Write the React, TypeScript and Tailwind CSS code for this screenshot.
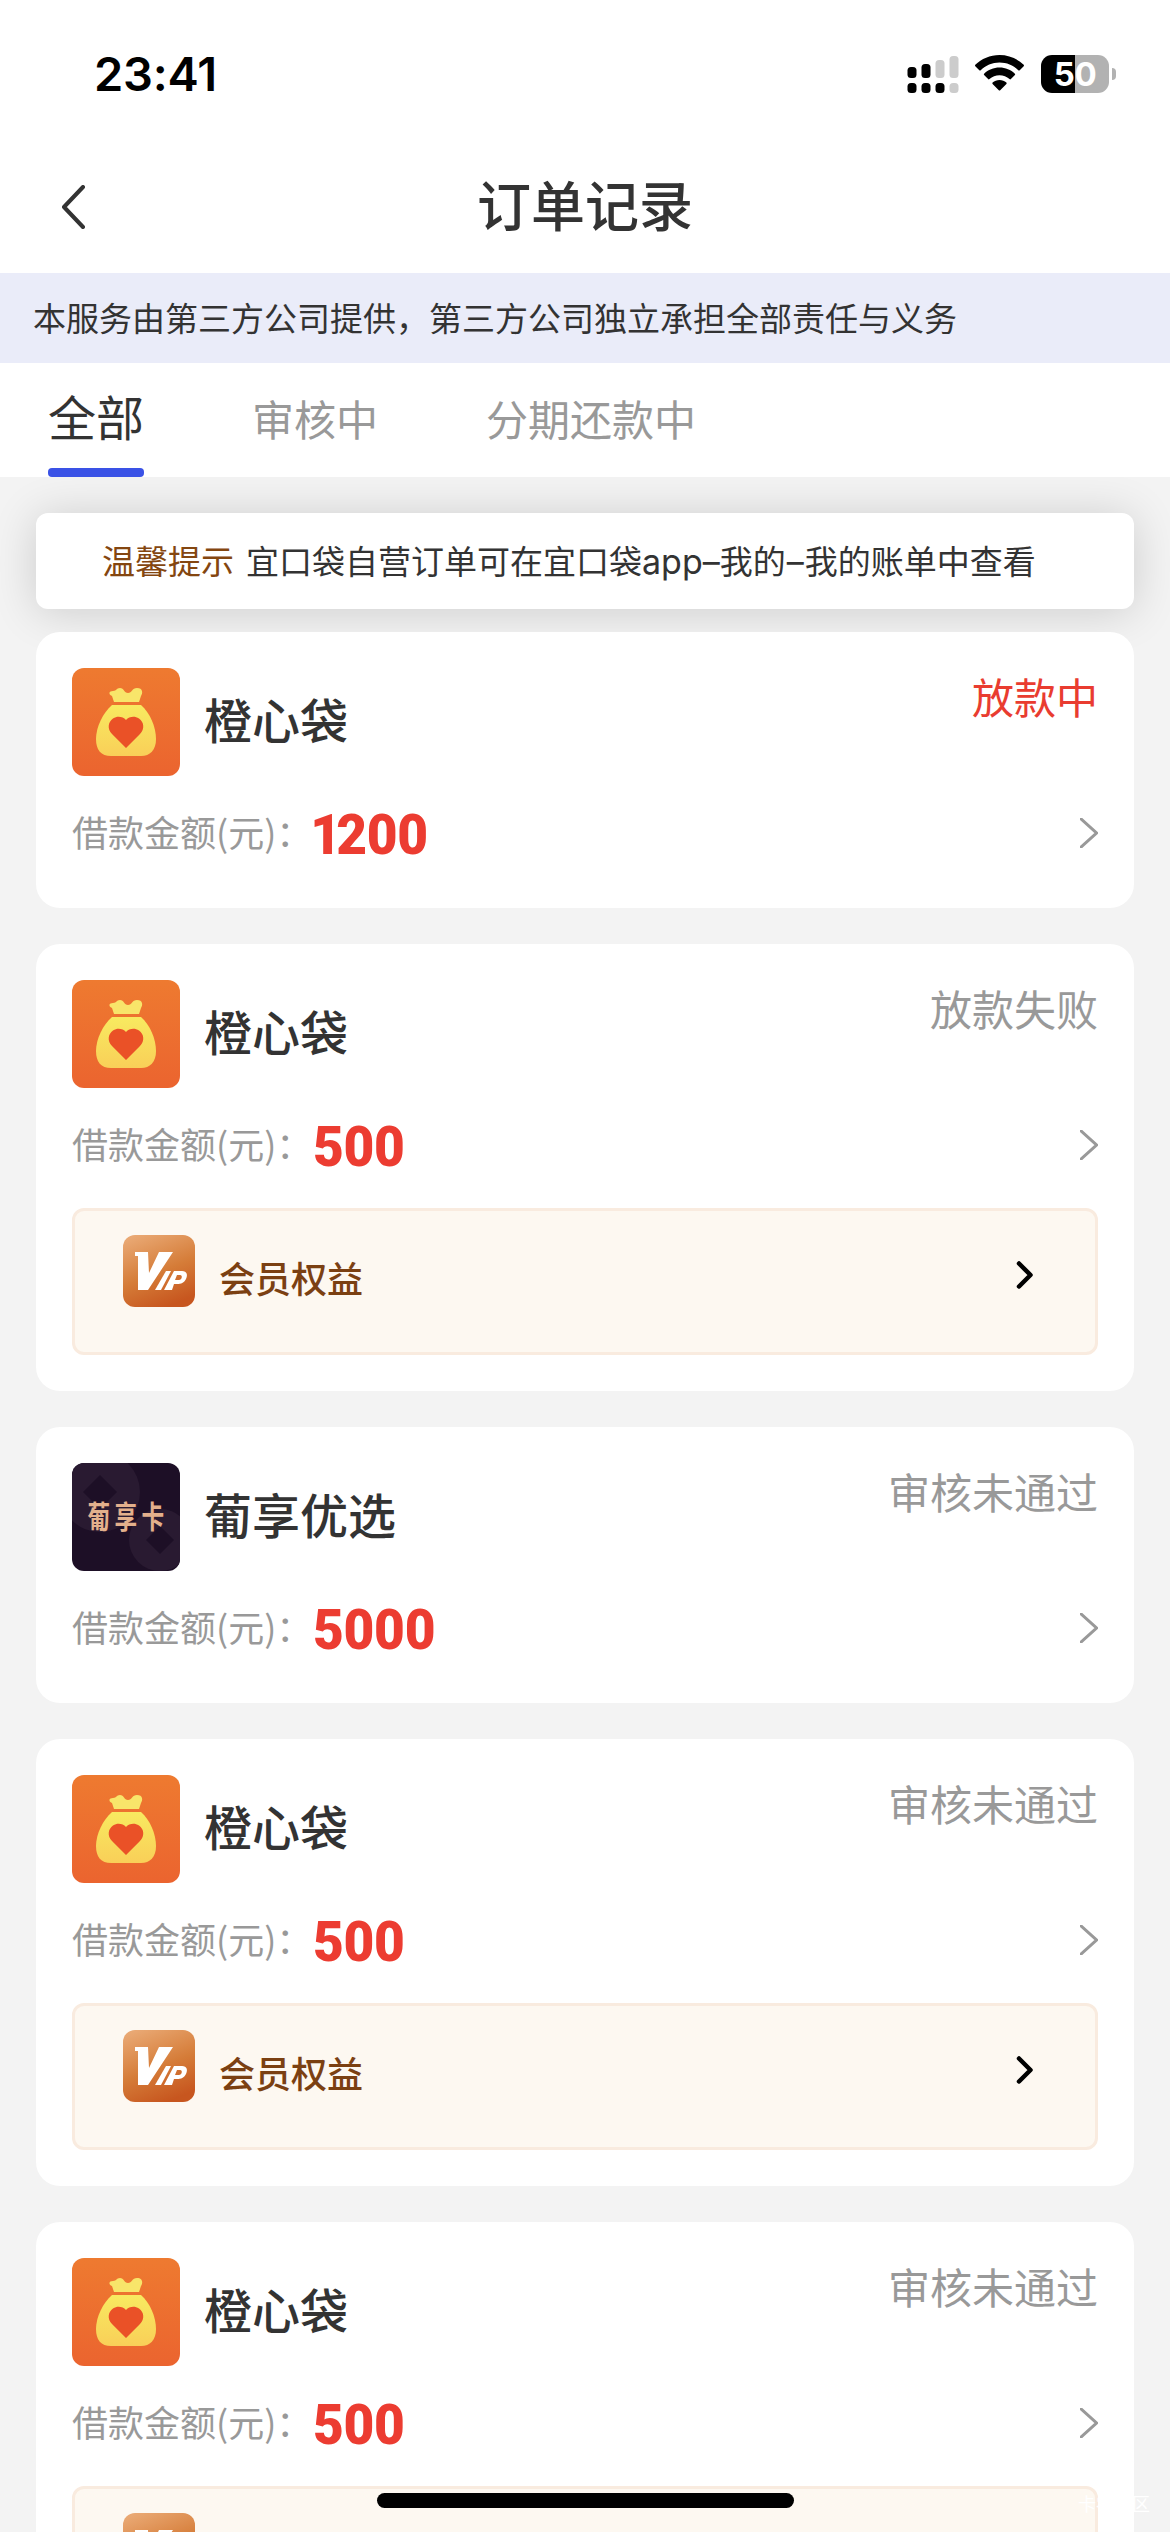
import type { ReactNode } from "react";

type Order = {
  id: number;
  product: "orange" | "grape";
  name: string;
  status: string;
  active?: boolean;
  amount: string;
  vip?: boolean;
};

const orders: Order[] = [
  { id: 1, product: "orange", name: "橙心袋", status: "放款中", active: true, amount: "1200" },
  { id: 2, product: "orange", name: "橙心袋", status: "放款失败", amount: "500", vip: true },
  { id: 3, product: "grape", name: "葡享优选", status: "审核未通过", amount: "5000" },
  { id: 4, product: "orange", name: "橙心袋", status: "审核未通过", amount: "500", vip: true },
  { id: 5, product: "orange", name: "橙心袋", status: "审核未通过", amount: "500", vip: true },
];

function StatusBar() {
  return (
    <div className="flex h-[141px] shrink-0 items-start justify-between pl-[94px] pr-[54px] pt-[47px]">
      <span className="font-['Inter','Noto_Sans_CJK_SC',sans-serif] text-[47px] leading-[54px] font-semibold tracking-[-0.2px] text-black">
        23:41
      </span>
      <div className="mt-[8px] flex items-start">
        <svg className="mt-[1px] h-[38px] w-[52px]" viewBox="0 0 52 38">
          <g fill="#000">
            <rect x="0.5" y="11" width="9" height="11" rx="3.5" />
            <rect x="14.5" y="8" width="9" height="14" rx="3.5" />
            <rect x="0.5" y="27" width="9" height="10" rx="3.5" />
            <rect x="14.5" y="27" width="9" height="10" rx="3.5" />
            <rect x="28.5" y="27" width="9" height="10" rx="3.5" />
          </g>
          <g fill="#cccccc">
            <rect x="28.5" y="4" width="9" height="18" rx="3.5" />
            <rect x="42.5" y="0" width="9" height="22" rx="3.5" />
            <rect x="42.5" y="27" width="9" height="10" rx="3.5" />
          </g>
        </svg>
        <svg className="ml-[16px] h-[37px] w-[49px]" viewBox="0 0 49 37">
          <path d="M24.5 0C34 0 42.500 3.800 48.700 9.800C49.100 10.200 49.100 10.800 48.700 11.200L44.700 15.200C44.300 15.600 43.700 15.600 43.300 15.200C38.400 10.500 31.800 7.600 24.500 7.600S10.600 10.500 5.700 15.200C5.300 15.600 4.700 15.600 4.300 15.200L0.300 11.200C-0.100 10.800 -0.100 10.200 0.300 9.800C6.500 3.800 15 0 24.500 0Z" />
          <path d="M24.500 12.600C30.500 12.600 35.900 14.900 39.900 18.700C40.300 19.100 40.300 19.700 39.900 20.100L35.900 24.100C35.500 24.500 34.900 24.500 34.500 24.100C31.800 21.700 28.300 20.200 24.500 20.200S17.200 21.700 14.500 24.100C14.100 24.500 13.500 24.500 13.100 24.100L9.100 20.100C8.700 19.700 8.700 19.100 9.100 18.700C13.100 14.900 18.500 12.600 24.500 12.600Z" />
          <path d="M24.500 25C27.200 25 29.600 26 31.400 27.600C31.800 28 31.800 28.600 31.400 29L25.200 35.200C24.800 35.600 24.200 35.600 23.800 35.200L17.600 29C17.200 28.600 17.200 28 17.600 27.600C19.400 26 21.800 25 24.500 25Z" />
        </svg>
        <div className="ml-[17px] flex items-center">
          <div className="flex h-[38px] w-[68px] items-center justify-center rounded-[11px] bg-linear-to-r from-black from-50% to-[#b2b2b2] to-50%">
            <span className="font-['Inter',sans-serif] text-[33px] leading-[38px] font-bold tracking-[-0.5px] text-white">
              50
            </span>
          </div>
          <div className="ml-[3px] h-[12px] w-[4px] rounded-r-full bg-[#b2b2b2]" />
        </div>
      </div>
    </div>
  );
}

function NavBar() {
  return (
    <div className="flex h-[132px] shrink-0 items-center">
      <div className="flex w-[200px] pl-[61px]">
        <svg className="h-[44px] w-[26px]" viewBox="0 0 26 44" fill="none">
          <path d="M22 2L3 22L22 42" stroke="#333" strokeWidth="4" strokeLinecap="round" strokeLinejoin="round" />
        </svg>
      </div>
      <h1 className="flex-1 pb-[6px] text-center text-[54px] leading-[72px] font-medium text-[#333]">
        订单记录
      </h1>
      <div className="w-[200px]" />
    </div>
  );
}

function Tab({ label, active }: { label: string; active?: boolean }) {
  if (active) {
    return (
      <div className="flex flex-col justify-between">
        <span className="pt-[16px] text-[48px] leading-[72px] text-[#333]">{label}</span>
        <span className="h-[9px] rounded-[4px] bg-[#3a52e6]" />
      </div>
    );
  }
  return <span className="pt-[19px] text-[42px] leading-[72px] text-[#999]">{label}</span>;
}

function OrangeLogo() {
  return (
    <svg className="size-[108px] rounded-[12px]" viewBox="0 0 108 108">
      <defs>
        <linearGradient id="orangeBg" x1="0" y1="0" x2="0" y2="1">
          <stop offset="0" stopColor="#ee7a30" />
          <stop offset="1" stopColor="#eb642f" />
        </linearGradient>
        <linearGradient id="bag" x1="0" y1="0" x2="0" y2="1">
          <stop offset="0" stopColor="#f8ea60" />
          <stop offset="1" stopColor="#f9cf58" />
        </linearGradient>
      </defs>
      <rect width="108" height="108" fill="url(#orangeBg)" />
      <path
        d="M42 34L40 28C36 26 37 23 41 23C45 23 44 20 48 20C52 20 52 25 56 25C60 25 60 20 65 20C71 20 71 25 69 28L67 34Z"
        fill="#f8e56a"
      />
      <path
        d="M40 37H69C78 45 84 59 84 71C84 82 78 88 69 88H39C29 88 24 82 24 71C24 59 31 45 40 37Z"
        fill="url(#bag)"
      />
      <path
        d="M54 80L40 66C35 61 36 54 41 50.500C46 47.500 51 49 54 52C57 49 62 47.500 67 50.500C72 54 73 61 68 66Z"
        fill="#ea5127"
      />
    </svg>
  );
}

function GrapeLogo() {
  return (
    <svg className="size-[108px] rounded-[12px]" viewBox="0 0 108 108">
      <rect width="108" height="108" fill="#1d0f26" />
      <circle cx="28" cy="29" r="40" fill="#291a31" />
      <path d="M28 12L45 29L28 46L11 29Z" fill="#1d0f26" />
      <circle cx="88" cy="77" r="31" fill="#291a31" />
      <path d="M88 63L102 77L88 91L74 77Z" fill="#1d0f26" />
      <text
        transform="translate(15.500 65) scale(0.73 1)"
        fontSize="31"
        letterSpacing="6"
        fontWeight="700"
        fontFamily="'Noto Sans CJK SC', sans-serif"
        fill="#e3b08c"
      >
        葡享卡
      </text>
    </svg>
  );
}

function VipBadge() {
  return (
    <svg className="size-[72px] rounded-[12px]" viewBox="0 0 72 72">
      <defs>
        <linearGradient id="vipBg" x1="0.2" y1="0" x2="0.6" y2="1">
          <stop offset="0" stopColor="#e9a873" />
          <stop offset="0.550" stopColor="#d57c38" />
          <stop offset="1" stopColor="#c7561f" />
        </linearGradient>
      </defs>
      <rect width="72" height="72" fill="url(#vipBg)" />
      <g fill="#fff">
        <path d="M12 17H25L26 38L36 17H50L25 55H15V21H12Z" />
        <path d="M43 36H48L38 55H32Z" />
        <path
          fillRule="evenodd"
          d="M51 36H59C64 36 65 40 63 44C61 48 58 49 54 49H51L49 55H41ZM54 40L52 45H56C59 45 60 40 57 40Z"
        />
      </g>
    </svg>
  );
}

function VipEntry({ children }: { children: ReactNode }) {
  return (
    <div className="mt-[24px] flex h-[147px] items-start rounded-[12px] border-[3px] border-[#f9ebdf] bg-[#fdf8f1] pt-[24px] pr-[61px] pl-[48px]">
      <VipBadge />
      <span className="mt-[24px] ml-[24px] flex-1 text-[36px] leading-[36px] font-medium text-[#7b4012]">
        {children}
      </span>
      <svg className="mt-[25px] h-[30px] w-[18px]" viewBox="0 0 18 30" fill="none">
        <path d="M3 3.500L14.500 15L3 26.500" stroke="#000" strokeWidth="4.500" strokeLinecap="round" strokeLinejoin="round" />
      </svg>
    </div>
  );
}

function Amount({ value }: { value: string }) {
  // a leading "1" is set tighter than the other digits
  const one = value.startsWith("1");
  return (
    <div className="flex-1">
      <div className="inline-block origin-left scale-x-[0.95] pt-[3px] font-['Roboto',sans-serif] text-[56px] leading-[78px] font-black tracking-[-0.3px] text-[#ec3c31]">
        {one && <span className="ml-[-3px] tracking-[-5px]">1</span>}
        {one ? value.slice(1) : value}
      </div>
    </div>
  );
}

function OrderCard({ order }: { order: Order }) {
  return (
    <div className="relative shrink-0 rounded-[24px] bg-white p-[36px]">
      <div className="flex h-[108px] items-start">
        {order.product === "orange" ? <OrangeLogo /> : <GrapeLogo />}
        <span className="ml-[24px] flex-1 text-[48px] leading-[100px] font-medium text-[#333]">
          {order.name}
        </span>
        <span
          className={
            order.active
              ? "text-[42px] leading-[56px] text-[#e93c30]"
              : "text-[42px] leading-[56px] text-[#999]"
          }
        >
          {order.status}
        </span>
      </div>
      <div className="mt-[18px] flex h-[78px] items-center">
        <span className="w-[241px] shrink-0 pb-[4px] text-[36px] whitespace-nowrap text-[#999]">
          借款金额(元)：
        </span>
        <Amount value={order.amount} />
        <svg className="h-[30px] w-[18px]" viewBox="0 0 18 30" fill="none">
          <path d="M0 0L16.500 15L0 30" stroke="#999" strokeWidth="3" />
        </svg>
      </div>
      {order.vip && <VipEntry>会员权益</VipEntry>}
    </div>
  );
}

export default function App() {
  return (
    <div className="relative flex h-[2532px] w-[1170px] flex-col overflow-hidden bg-[#f3f3f3] font-['Noto_Sans_CJK_SC',sans-serif]">
      <header className="relative z-10 flex flex-col bg-white">
        <StatusBar />
        <NavBar />
        <div className="flex h-[90px] items-center bg-[#eaecf9] px-[33px] pb-[1px] text-[33px] text-[#333]">
          本服务由第三方公司提供，第三方公司独立承担全部责任与义务
        </div>
        <div className="flex h-[114px] gap-[108px] pl-[48px]">
          <Tab label="全部" active />
          <Tab label="审核中" />
          <Tab label="分期还款中" />
        </div>
      </header>

      <main className="flex flex-col px-[36px] pt-[36px]">
        <div className="flex h-[96px] shrink-0 items-center rounded-[12px] bg-white pl-[66px] shadow-[0_3px_45px_rgba(0,0,0,0.16)]">
          <p className="flex items-baseline text-[33px] text-[#333]">
            <span className="mr-[12px] text-[#844610]">温馨提示</span>
            <span>宜口袋自营订单可在宜口袋</span>
            <span className="font-['Inter',sans-serif] text-[34px]">app–</span>
            <span>我的</span>
            <span className="px-[1px] font-['Inter',sans-serif] text-[34px]">–</span>
            <span>我的账单中查看</span>
          </p>
        </div>
        <div className="mt-[23px] flex flex-col gap-[36px]">
          {orders.map((order) => (
            <OrderCard key={order.id} order={order} />
          ))}
        </div>
      </main>

      {/* Home indicator */}
      <div className="absolute bottom-[24px] left-[377px] z-20 h-[15px] w-[417px] rounded-full bg-black" />
      <span className="absolute right-[20px] bottom-[16px] z-20 text-[18px] leading-[26px] text-white">
        卡农社区
      </span>
    </div>
  );
}
